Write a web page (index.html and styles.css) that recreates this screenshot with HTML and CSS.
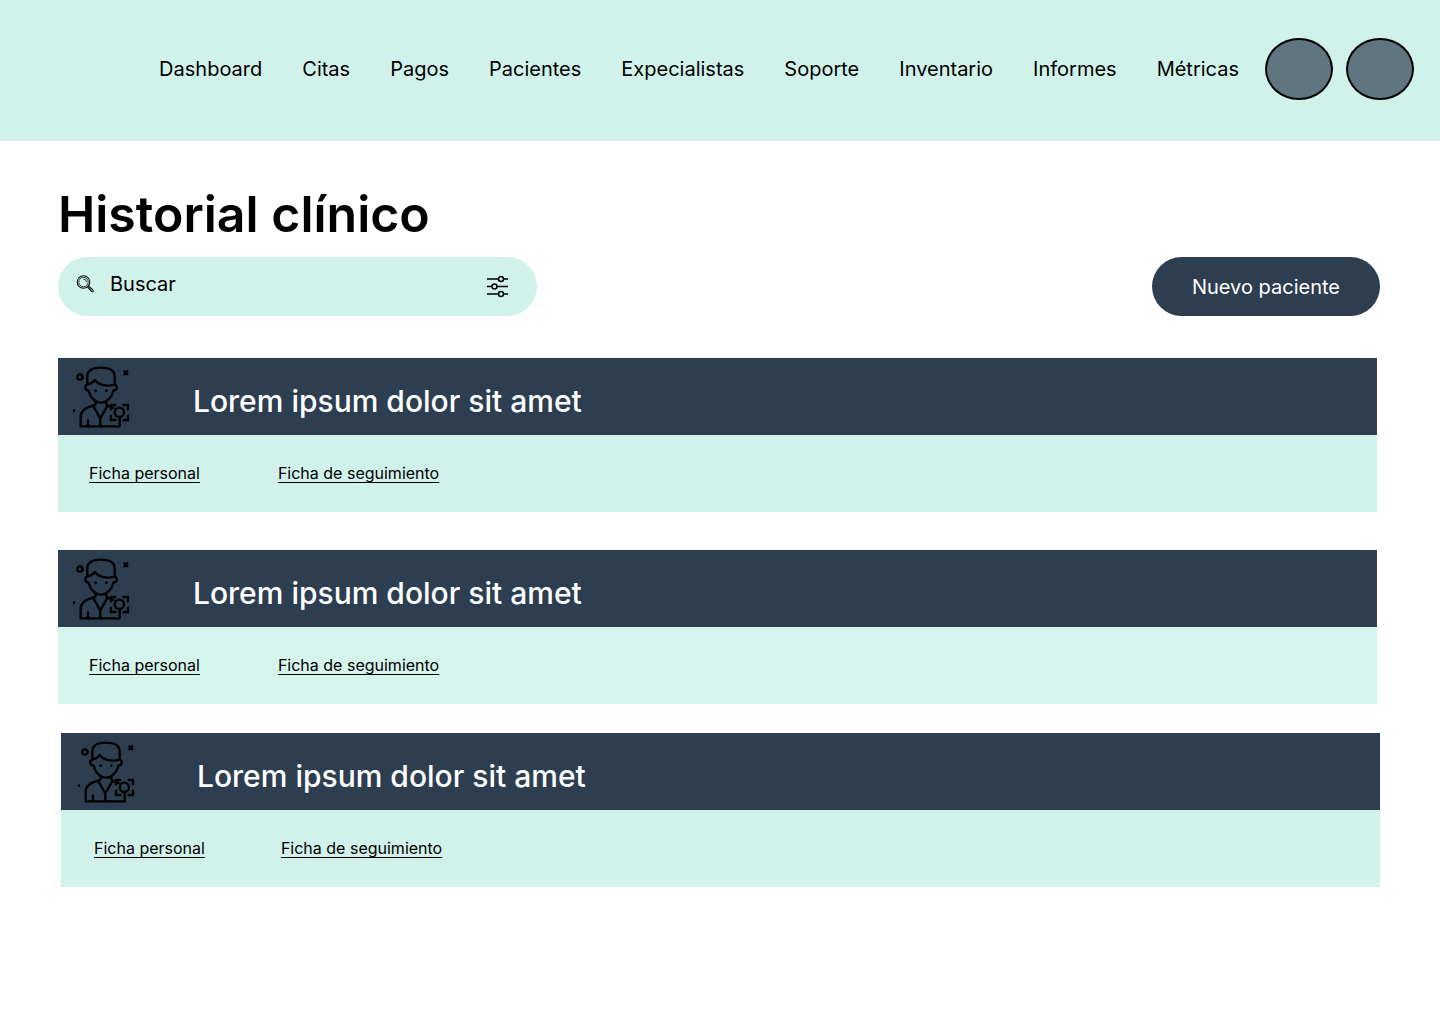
FILE: index.html
```html
<!DOCTYPE html>
<html lang="es">
<head>
<meta charset="utf-8">
<meta name="viewport" content="width=device-width, initial-scale=1">
<title>Historial clínico</title>
<link rel="stylesheet" href="styles.css">
</head>
<body>
<svg class="sprite" aria-hidden="true">
  <symbol id="patient" viewBox="36 18 180 198">
    <g fill="none" stroke="#000" stroke-width="7" stroke-linejoin="round" stroke-linecap="round">
      <path d="M82 80V56C82 37 97 29 123 29s41 8 41 27v24"/>
      <path d="M82 79c10-1 17-6 22-13 10 14 32 21 60 14"/>
      <path d="M82 80c-9 1-9 17 4 18 4 20 20 36 37 36s33-16 37-36c13-1 13-17 4-18"/>
      <path d="M99 143c-24 6-37 16-37 34v28h117v-27"/>
      <path d="M107 133v6l-8 4 22 38 22-38-4-4v-6M143 143l18 7M121 181v24M84 187v18"/>
      <circle cx="178" cy="163" r="14"/>
      <circle cx="60" cy="57" r="8"/>
      <path stroke-linecap="butt" stroke-linejoin="miter" d="M153 157v-16h16M188 141h16v16M204 170v16h-16M169 186h-16v-16M191 38l13 13M204 38l-13 13"/>
    </g>
    <circle cx="107" cy="98" r="4"/><circle cx="139" cy="98" r="4"/><circle cx="42" cy="158" r="4"/>
  </symbol>
</svg>
<header class="topbar">
  <nav class="nav" aria-label="Principal">
    <a href="#">Dashboard</a>
    <a href="#">Citas</a>
    <a href="#">Pagos</a>
    <a href="#">Pacientes</a>
    <a href="#">Expecialistas</a>
    <a href="#">Soporte</a>
    <a href="#">Inventario</a>
    <a href="#">Informes</a>
    <a href="#">Métricas</a>
  </nav>
  <div class="actions">
    <button class="round" type="button" aria-label="Notificaciones"></button>
    <button class="round" type="button" aria-label="Perfil"></button>
  </div>
</header>
<main class="content">
  <h1 class="title">Historial clínico</h1>
  <div class="toolbar">
    <form class="search" role="search">
      <svg class="search-icon" viewBox="0 0 18 18" fill="none" stroke="#111" aria-hidden="true">
        <circle cx="7.500" cy="7" r="6.300" stroke-width="1.100"/>
        <circle cx="7.500" cy="7" r="4.700" stroke-width=".8"/>
        <path d="M7.500 4.200a3 3 0 0 1 3 3" stroke-width=".8"/>
        <path d="M11.500 12l4.200 4.500c1 .7 2-.3 1.300-1.300l-4.500-4.200" stroke-width="1.100"/>
      </svg>
      <input class="search-input" type="text" placeholder="Buscar" aria-label="Buscar">
      <button class="filter" type="button" aria-label="Filtros">
        <svg class="filter-icon" viewBox="0 0 22 22" fill="none" stroke="#000" stroke-width="1.500" aria-hidden="true">
          <path d="M0 3H11M17 3H21M0 10.500H5M10 10.500H21M0 18H11M17 18H21"/>
          <circle cx="14" cy="3" r="2.500"/><circle cx="7.500" cy="10.500" r="2.500"/><circle cx="14" cy="18" r="2.500"/>
        </svg>
      </button>
    </form>
    <button class="primary" type="button">Nuevo paciente</button>
  </div>
  <div class="records">
    <article class="record">
      <header class="record-head">
        <svg class="patient-icon" aria-hidden="true"><use href="#patient"/></svg>
        <h2 class="record-name">Lorem ipsum dolor sit amet</h2>
      </header>
      <div class="record-links">
        <a href="#">Ficha personal</a>
        <a href="#">Ficha de seguimiento</a>
      </div>
    </article>
    <article class="record record-light">
      <header class="record-head">
        <svg class="patient-icon" aria-hidden="true"><use href="#patient"/></svg>
        <h2 class="record-name">Lorem ipsum dolor sit amet</h2>
      </header>
      <div class="record-links">
        <a href="#">Ficha personal</a>
        <a href="#">Ficha de seguimiento</a>
      </div>
    </article>
    <article class="record record-last">
      <header class="record-head">
        <svg class="patient-icon" aria-hidden="true"><use href="#patient"/></svg>
        <h2 class="record-name">Lorem ipsum dolor sit amet</h2>
      </header>
      <div class="record-links">
        <a href="#">Ficha personal</a>
        <a href="#">Ficha de seguimiento</a>
      </div>
    </article>
  </div>
</main>
</body>
</html>
```
FILE: styles.css
```css
* {
  box-sizing: border-box;
}

body {
  margin: 0;
  background: #fff;
  color: #000;
  font-family: Inter, sans-serif;
  font-size: 20px;
  line-height: 24px;
}

button,
input {
  font: inherit;
}

.sprite {
  display: block;
  width: 0;
  height: 0;
}

.topbar {
  display: flex;
  align-items: center;
  justify-content: flex-end;
  gap: 26px;
  padding: 38px 26px 41px;
  background: #d1f2ea;
}

.nav {
  display: flex;
  gap: 40px;
}

.nav a {
  color: #000;
  text-decoration: none;
}

.actions {
  display: flex;
  gap: 13px;
}

.round {
  width: 68px;
  height: 62px;
  padding: 0;
  border: 2px solid #000;
  border-radius: 50%;
  background: #5f757f;
}

.content {
  padding: 43px 60px 40px 58px;
}

.title {
  margin: 0 0 13px;
  font-size: 50px;
  font-weight: 600;
  line-height: 60px;
}

.toolbar {
  display: flex;
  align-items: center;
  justify-content: space-between;
}

.search {
  display: flex;
  align-items: center;
  width: 479px;
  height: 59px;
  padding: 0 28px 0 18px;
  border-radius: 30px;
  background: #d1f2ea;
}

.search-icon {
  width: 18px;
  height: 18px;
  margin-bottom: 6px;
}

.search-input {
  flex: 1;
  min-width: 0;
  margin-bottom: 6px;
  padding: 0 16px;
  border: 0;
  background: none;
}

.search-input::placeholder {
  color: #000;
  opacity: 1;
}

.filter {
  display: flex;
  padding: 0;
  border: 0;
  background: none;
}

.filter-icon {
  width: 22px;
  height: 22px;
}

.primary {
  height: 59px;
  padding: 0 40px;
  border: 0;
  border-radius: 30px;
  background: #2d3e50;
  color: #fff;
}

.records {
  margin-top: 42px;
}

.record {
  margin: 0 3px 38px 0;
  background: #d1f2ea;
}

.record-light {
  margin-bottom: 29px;
  background: #d4f4ec;
}

.record-last {
  margin: 0 0 0 3px;
}

.record-head {
  display: flex;
  align-items: center;
  gap: 61px;
  height: 77px;
  padding-left: 14px;
  background: #2d3e50;
}

.record-last .record-head {
  gap: 60px;
  padding-left: 16px;
}

.patient-icon {
  width: 60px;
  height: 66px;
}

.record-name {
  margin: 8px 0 0;
  font-size: 30px;
  font-weight: 500;
  line-height: 36px;
  color: #fff;
}

.record-links {
  display: flex;
  align-items: center;
  gap: 78px;
  height: 77px;
  padding: 0 31px 2px;
  font-size: 16px;
}

.record-last .record-links {
  gap: 76px;
  padding-left: 33px;
}

.record-links a {
  color: #000;
  text-underline-offset: 3px;
  text-decoration-thickness: 1px;
  text-decoration-skip-ink: none;
}
```
